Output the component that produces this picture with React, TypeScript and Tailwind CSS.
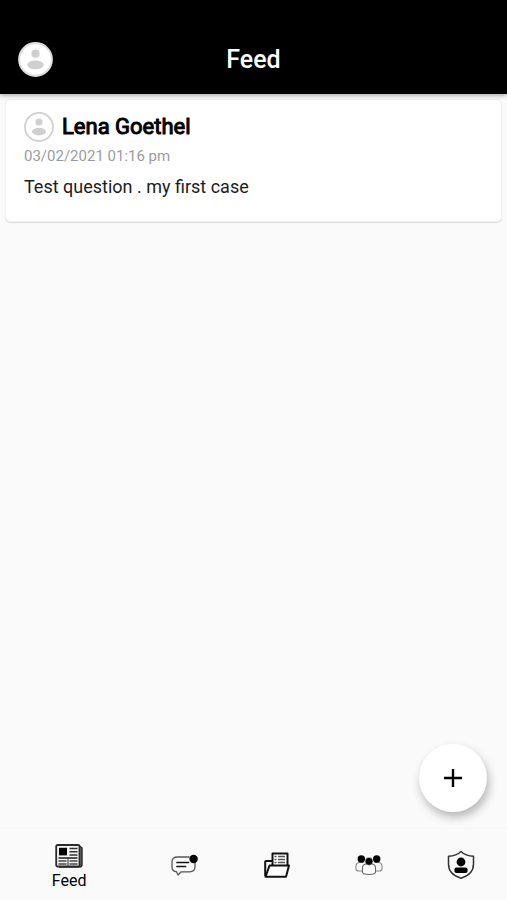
import type { ReactNode } from "react";

function Avatar({ className, ring }: { className: string; ring: string }) {
  return (
    <svg viewBox="0 0 34 34" className={className} aria-hidden="true">
      <circle cx="17" cy="17" r="15.9" fill="#fff" stroke={ring} strokeWidth="2" />
      <circle cx="17" cy="11.4" r="4" fill="#cfcfcf" />
      <ellipse cx="17" cy="22.2" rx="8" ry="4.3" fill="#cfcfcf" />
    </svg>
  );
}

function NewsIcon() {
  return (
    <svg viewBox="0 0 28 24" className="h-6 w-7" fill="none" aria-hidden="true">
      <path d="M24 1.500l3 2.500v16.500q0 2.500-3 2.500H4" fill="#777" stroke="#222" strokeWidth="1.400" />
      <rect x="1.200" y="1" width="23.300" height="21.500" rx="1.500" fill="#f4f4f4" stroke="#2a2a2a" strokeWidth="1.800" />
      <rect x="4" y="3.800" width="8" height="7.600" fill="#000" />
      <path d="M14.500 4.500h8M14.500 7.700h8M14.500 10.900h8" stroke="#333" strokeWidth="1.500" />
      <path d="M3.500 14h19" stroke="#333" strokeWidth="1.700" />
      <path d="M3.500 17h8M14.500 17h8M3.500 20h8M14.500 20h8" stroke="#444" strokeWidth="1.500" />
      <path d="M13 14v8" stroke="#444" strokeWidth="1.200" />
    </svg>
  );
}

function ChatIcon() {
  return (
    <svg viewBox="0 0 28 24" className="h-6 w-7" fill="none" aria-hidden="true">
      <path
        d="M19.500 4H7.500Q2 4 2 9v4.500q0 5 4.500 5.200l1.500 3.300 3.200-3.200h8.300q5.500 0 5.500-5.300V9"
        stroke="#555"
        strokeWidth="1.300"
        strokeLinejoin="round"
      />
      <path d="M7 9.500h11.500M7 13.500h8.500" stroke="#111" strokeWidth="1.700" strokeLinecap="round" />
      <circle cx="23.600" cy="6" r="4.200" fill="#000" />
    </svg>
  );
}

function FolderIcon() {
  return (
    <svg viewBox="0 0 26 26" className="size-[26px]" fill="none" stroke="#111" aria-hidden="true">
      <path d="M8 9H2q-.8 0-.8.800V24" strokeWidth="2" />
      <path d="M8.500 13.500V1.500h15v12" fill="#fff" strokeWidth="2" strokeLinejoin="round" />
      <path d="M10.500 4.500h2M14 4.500h7M10.500 7.500h2M14 7.500h7M10.500 10.500h2M14 10.500h7" stroke="#555" strokeWidth="1.300" />
      <path d="M5.500 13.500H25L22 24.800H1.500z" fill="#fff" strokeWidth="2" strokeLinejoin="round" />
    </svg>
  );
}

function PeopleIcon() {
  return (
    <svg viewBox="0 0 28 24" className="h-6 w-7" fill="none" stroke="#888" strokeWidth="1.100" aria-hidden="true">
      <path d="M8.500 9.500H5Q1 9.500 1 13.500V16q0 2 3 2h4" />
      <path d="M19.500 9.500H23q4 0 4 4V16q0 2-3 2h-4" />
      <path
        d="M11.500 11h5q4 0 4 4v4q0 2.500-6.500 2.500T7.500 19v-4q0-4 4-4z"
        fill="#fff"
        stroke="#666"
      />
      <circle cx="6.300" cy="6" r="3.700" fill="#000" stroke="none" />
      <circle cx="21.700" cy="6" r="3.700" fill="#000" stroke="none" />
      <circle cx="14" cy="8.300" r="3.900" fill="#000" stroke="#fafafa" strokeWidth="0.400" />
    </svg>
  );
}

function ShieldIcon() {
  return (
    <svg viewBox="0 0 28 30" className="h-[30px] w-7" fill="none" aria-hidden="true">
      <path
        d="M14 1.500Q9.500 6 1.500 6.300V14q0 10.500 12.500 14.200Q26.500 24.500 26.500 14V6.300Q18.500 6 14 1.500z"
        stroke="#333"
        strokeWidth="1.500"
        strokeLinejoin="round"
      />
      <circle cx="14" cy="12" r="4.400" fill="#000" />
      <rect x="7.500" y="17.500" width="13" height="5.500" rx="1.800" fill="#000" />
    </svg>
  );
}

function NavItem({ label, children }: { label: string; children: ReactNode }) {
  return (
    <button type="button" aria-label={label} className="flex grow-2 basis-0 items-center justify-center">
      {children}
    </button>
  );
}

export default function App() {
  return (
    <div className="flex min-h-screen flex-col bg-[#fafafa] font-[Roboto,sans-serif] text-black">
      <header className="z-10 grid grid-cols-3 items-center bg-black px-[18px] pt-[42px] pb-[17px] shadow-[0_1px_5px_rgba(0,0,0,0.4)]">
        <button type="button" aria-label="Profile" className="justify-self-start">
          <Avatar className="size-[35px]" ring="#dedede" />
        </button>
        <h1 className="text-center text-[25px] leading-8 font-medium text-white">Feed</h1>
      </header>

      <main className="flex-1 px-[5px] py-[5px]">
        <article className="rounded-[5px] border border-[#f0f0f0] bg-white px-[18px] pt-[11px] pb-[22px] shadow-[0_1px_1px_rgba(0,0,0,0.12)]">
          <div className="flex items-center gap-2">
            <Avatar className="size-[30px]" ring="#cfcfcf" />
            <h2 className="text-[22px] leading-8 font-normal [-webkit-text-stroke:1px_black]">Lena Goethel</h2>
          </div>
          <time className="mt-[3px] block text-[15px] leading-5 text-[#9b9b9b]">03/02/2021 01:16 pm</time>
          <p className="mt-[9px] text-lg leading-6 text-[#1c1c1c]">Test question . my first case</p>
        </article>
      </main>

      <button
        type="button"
        aria-label="Add question"
        className="fixed right-5 bottom-[88px] flex size-[68px] items-center justify-center rounded-full bg-white shadow-[2px_5px_10px_rgba(0,0,0,0.28)]"
      >
        <svg viewBox="0 0 18 18" className="size-[18px]" stroke="#000" strokeWidth="2.400" aria-hidden="true">
          <path d="M9 0v18M0 9h18" />
        </svg>
      </button>

      <nav className="flex h-[72px] border-t border-[#f7f7f7] bg-[#fafafa]">
        <button type="button" className="flex grow-3 basis-0 flex-col items-center justify-end gap-[3px] pb-[9px]">
          <NewsIcon />
          <span className="text-base leading-5">Feed</span>
        </button>
        <NavItem label="Messages">
          <ChatIcon />
        </NavItem>
        <NavItem label="Cases">
          <FolderIcon />
        </NavItem>
        <NavItem label="Community">
          <PeopleIcon />
        </NavItem>
        <NavItem label="Account">
          <ShieldIcon />
        </NavItem>
      </nav>
    </div>
  );
}
